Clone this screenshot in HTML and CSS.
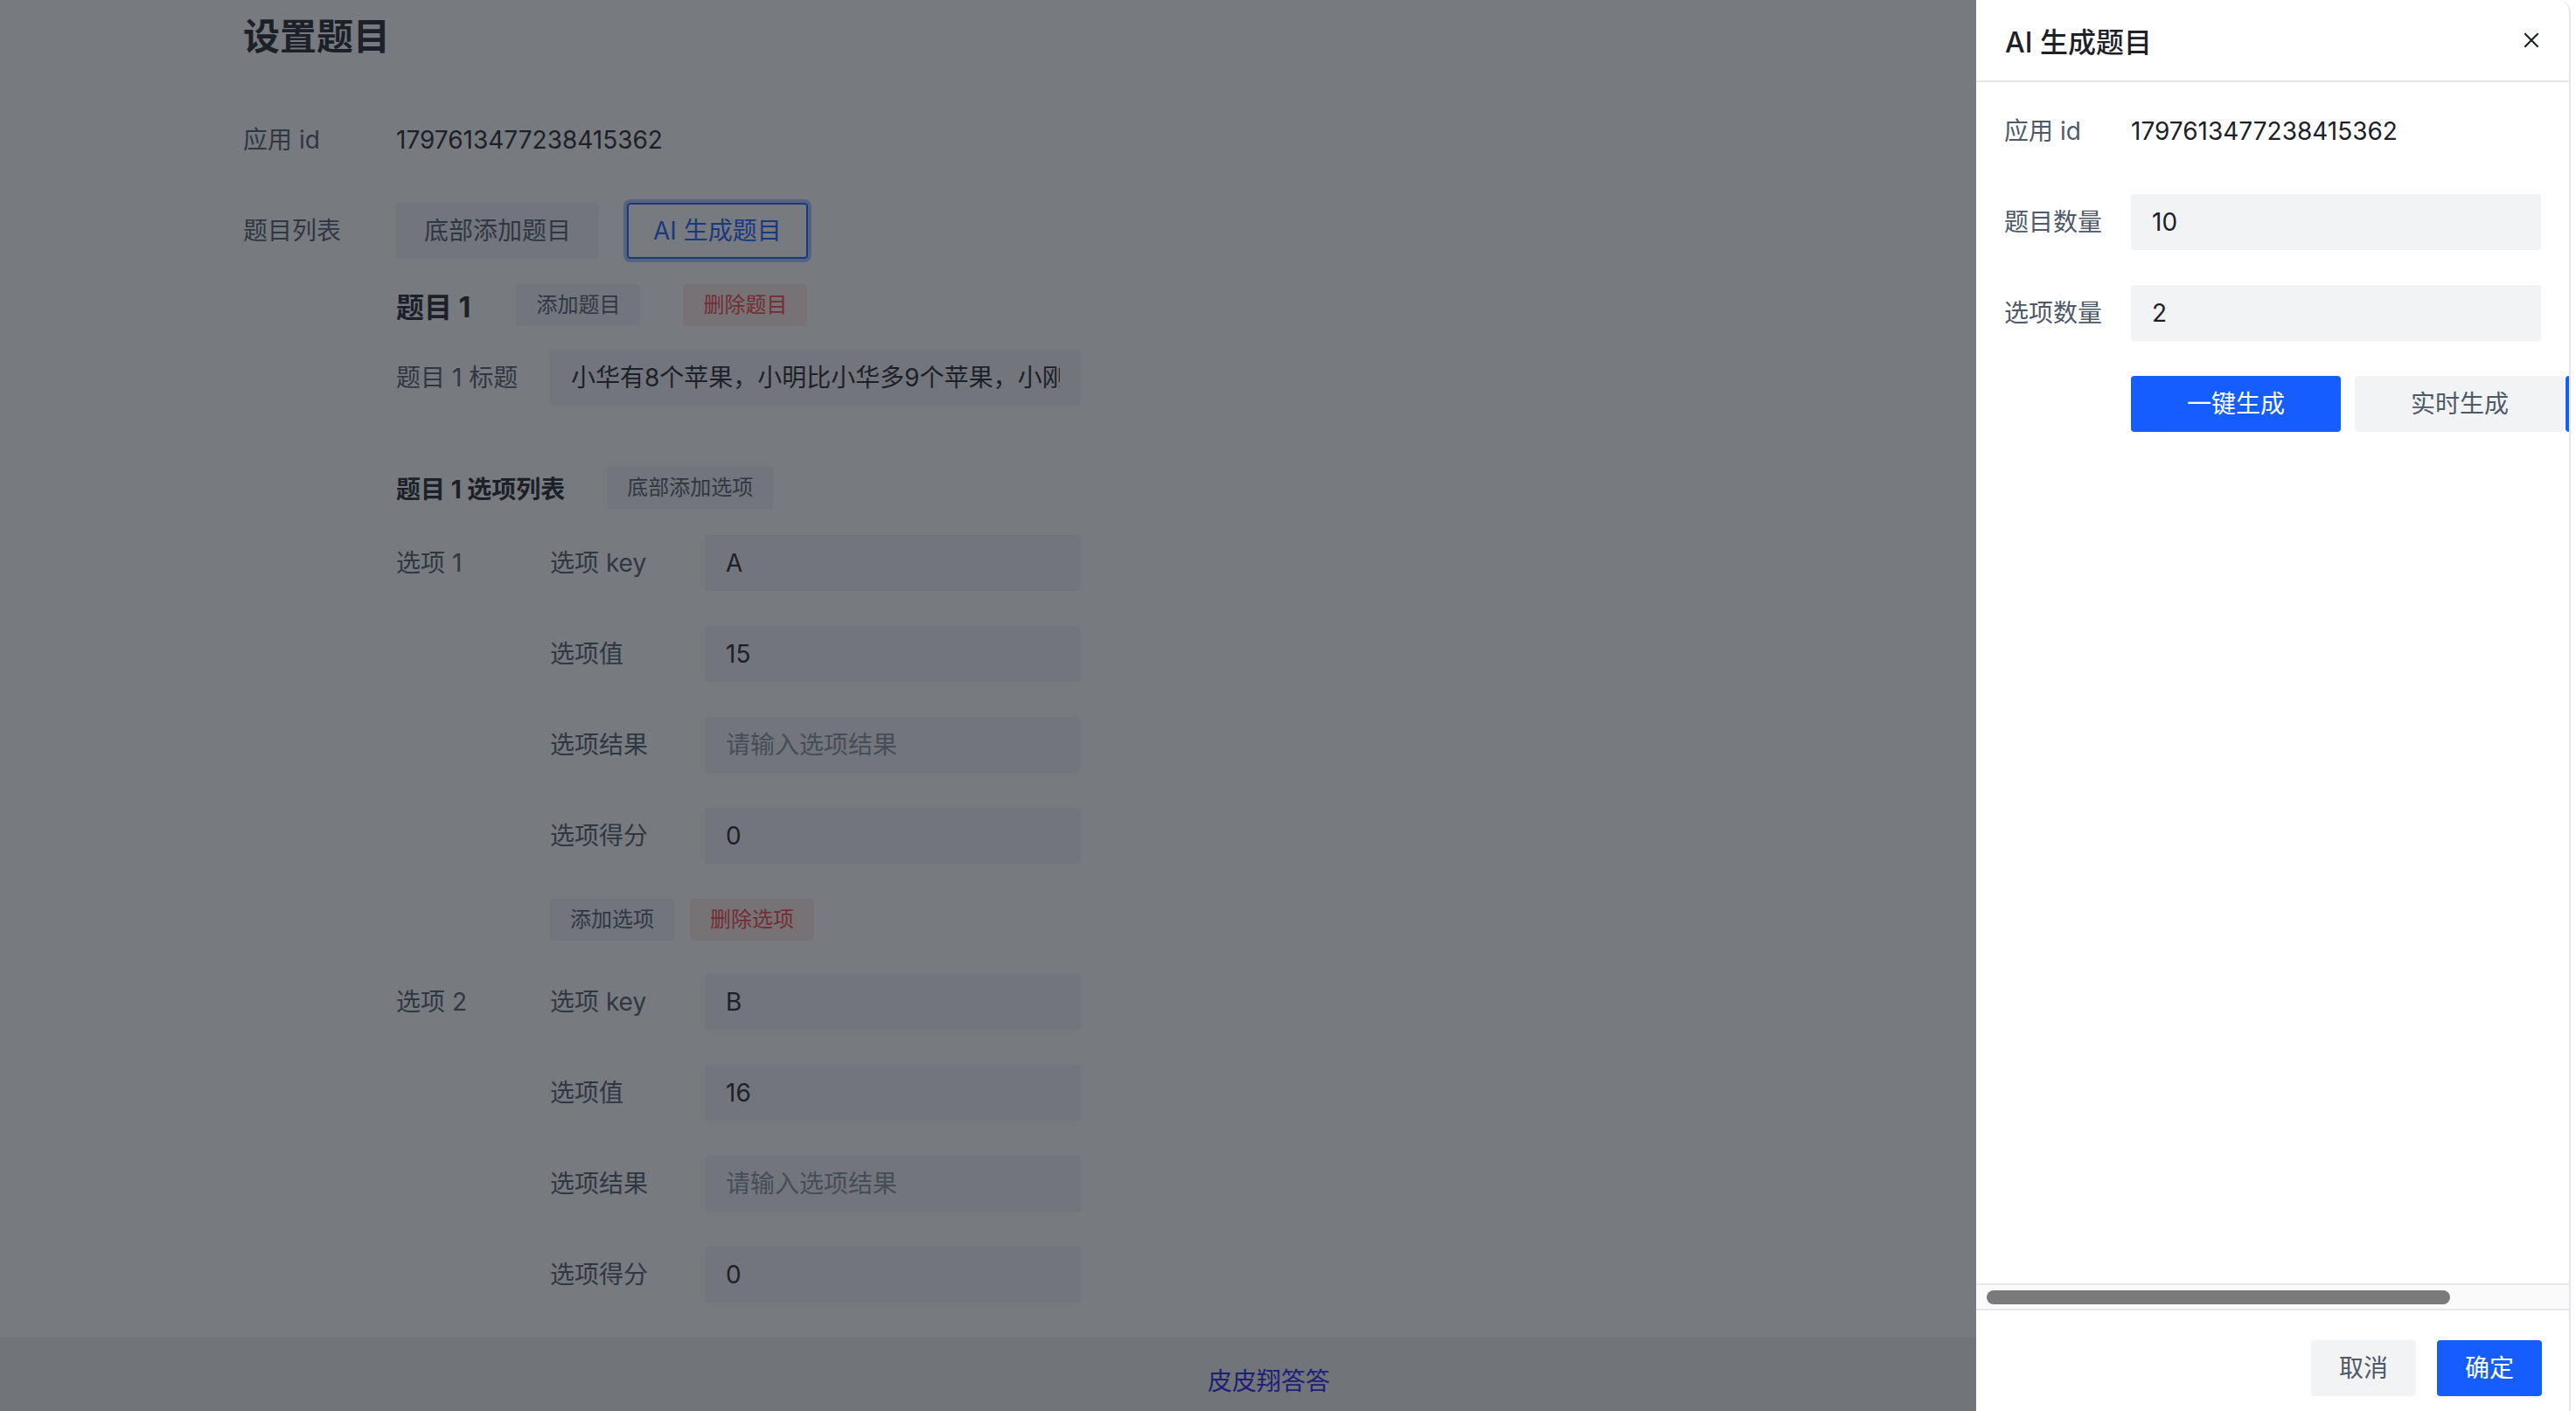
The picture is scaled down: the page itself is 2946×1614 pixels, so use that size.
FILE: index.html
```html
<!DOCTYPE html>
<html lang="zh-CN">
<head>
<meta charset="utf-8">
<title>设置题目</title>
<link rel="stylesheet" href="styles.css">
</head>
<body>
<div class="page">
  <main class="main">
    <h2 class="title">设置题目</h2>
    <div class="form">
      <div class="item">
        <div class="label">应用 id</div>
        <div class="control text">1797613477238415362</div>
      </div>
      <div class="item">
        <div class="label">题目列表</div>
        <div class="control">
          <div class="space-lg">
            <button class="btn btn-wide">底部添加题目</button>
            <button class="btn btn-outline">AI 生成题目</button>
          </div>
          <div class="q-head">
            <span class="q-title">题目 1</span>
            <button class="btn btn-mini">添加题目</button>
            <button class="btn btn-mini btn-danger">删除题目</button>
          </div>
          <div class="item q-item">
            <div class="label label-sub">题目 1 标题</div>
            <div class="control"><div class="input"><span>小华有8个苹果，小明比小华多9个苹果，小刚比小明少3个苹果，请问小刚有几个苹果？</span></div></div>
          </div>
          <div class="opt-head">
            <span class="opt-title">题目 1 选项列表</span>
            <button class="btn btn-mini">底部添加选项</button>
          </div>
          <div class="option">
            <div class="opt-name">选项 1</div>
            <div class="opt-fields">
              <div class="item">
                <div class="label label-sub">选项 key</div>
                <div class="control"><div class="input"><span>A</span></div></div>
              </div>
              <div class="item">
                <div class="label label-sub">选项值</div>
                <div class="control"><div class="input"><span>15</span></div></div>
              </div>
              <div class="item">
                <div class="label label-sub">选项结果</div>
                <div class="control"><div class="input placeholder"><span>请输入选项结果</span></div></div>
              </div>
              <div class="item">
                <div class="label label-sub">选项得分</div>
                <div class="control"><div class="input"><span>0</span></div></div>
              </div>
              <div class="space-sm">
                <button class="btn btn-mini">添加选项</button>
                <button class="btn btn-mini btn-danger">删除选项</button>
              </div>
            </div>
          </div>
          <div class="option">
            <div class="opt-name">选项 2</div>
            <div class="opt-fields">
              <div class="item">
                <div class="label label-sub">选项 key</div>
                <div class="control"><div class="input"><span>B</span></div></div>
              </div>
              <div class="item">
                <div class="label label-sub">选项值</div>
                <div class="control"><div class="input"><span>16</span></div></div>
              </div>
              <div class="item">
                <div class="label label-sub">选项结果</div>
                <div class="control"><div class="input placeholder"><span>请输入选项结果</span></div></div>
              </div>
              <div class="item">
                <div class="label label-sub">选项得分</div>
                <div class="control"><div class="input"><span>0</span></div></div>
              </div>
            </div>
          </div>
        </div>
      </div>
    </div>
  </main>
  <footer class="footer"><a class="footer-link" href="#">皮皮翔答答</a></footer>
</div>

<div class="mask"></div>

<div class="drawer-wrap">
  <div class="drawer">
    <div class="drawer-header">
      <span class="drawer-title">AI 生成题目</span>
      <span class="close">
        <svg width="26" height="26" viewBox="0 0 48 48" fill="none" stroke="#1d2129" stroke-width="4">
          <path d="M9.857 9.858 38.142 38.142M38.142 9.858 9.857 38.142"/>
        </svg>
      </span>
    </div>
    <div class="drawer-body">
      <div class="d-item">
        <div class="d-label">应用 id</div>
        <div class="text">1797613477238415362</div>
      </div>
      <div class="d-item">
        <div class="d-label">题目数量</div>
        <div class="control"><div class="input"><span>10</span></div></div>
      </div>
      <div class="d-item">
        <div class="d-label">选项数量</div>
        <div class="control"><div class="input"><span>2</span></div></div>
      </div>
      <div class="d-item">
        <div class="d-label"></div>
        <div class="d-actions">
          <button class="btn btn-primary btn-fixed">一键生成</button>
          <button class="btn btn-fixed">实时生成</button>
          <button class="btn btn-primary btn-fixed btn-tail" aria-label="更多"></button>
        </div>
      </div>
    </div>
    <div class="hscroll"><div class="thumb"></div></div>
    <div class="drawer-footer">
      <button class="btn btn-foot">取消</button>
      <button class="btn btn-primary btn-foot">确定</button>
    </div>
  </div>
</div>
</body>
</html>
```

FILE: styles.css
```css
* { box-sizing: border-box; }

html, body {
  margin: 0;
  padding: 0;
}

body {
  width: 2946px;
  height: 1614px;
  overflow: hidden;
  background: #ffffff;
  font-family: Inter, "Noto Sans CJK SC", sans-serif;
  font-size: 28px;
  color: #1d2129;
}

.page {
  display: flex;
  flex-direction: column;
  height: 1614px;
}

.main {
  height: 1530px;
  flex: none;
  overflow: hidden;
  padding-left: 278px;
}

.title {
  margin: 14px 0 0;
  font-size: 42px;
  line-height: 56px;
  font-weight: 600;
  color: #1d2129;
}

.form {
  margin-top: 58px;
  width: 958px;
}

.item {
  display: flex;
  align-items: flex-start;
  margin-bottom: 40px;
}

.label {
  flex: none;
  width: 175px;
  line-height: 64px;
  color: #4e5969;
  white-space: nowrap;
}

.label-sub {
  width: 176px;
}

.control {
  flex: 1;
  min-width: 0;
}

.text {
  line-height: 64px;
  color: #1d2129;
}

.input {
  height: 64px;
  padding: 0 24px;
  background: #f2f3f5;
  border-radius: 4px;
  color: #1d2129;
}

.input span {
  display: block;
  line-height: 64px;
  white-space: nowrap;
  overflow: hidden;
}

.input.placeholder {
  color: #86909c;
}

/* buttons */
.btn {
  font: inherit;
  border: 0;
  height: 64px;
  padding: 0 30px;
  border-radius: 4px;
  background: #f2f3f5;
  color: #4e5969;
  line-height: 64px;
  white-space: nowrap;
  flex: none;
}

.btn-wide {
  padding: 0 32px;
}

.btn-mini {
  height: 48px;
  line-height: 48px;
  padding: 0 23px;
  font-size: 24px;
}

.btn-danger {
  background: #ffece8;
  color: #f53f3f;
}

.btn-outline {
  background: transparent;
  border: 2px solid #165dff;
  color: #165dff;
  line-height: 60px;
  padding: 0 28px;
  box-shadow: 0 0 0 4px #a9c9ff;
}

.btn-primary {
  background: #165dff;
  color: #ffffff;
}

.space-lg {
  display: flex;
  gap: 32px;
}

.space-sm {
  display: flex;
  gap: 18px;
}

.q-head {
  display: flex;
  align-items: center;
  gap: 49px;
  height: 48px;
  margin-top: 29px;
}

.q-title {
  font-size: 32px;
  font-weight: 700;
  color: #1d2129;
  margin-right: 3px;
}

.q-item {
  margin-top: 27px;
}

.opt-head {
  display: flex;
  align-items: center;
  gap: 48px;
  height: 48px;
  margin-top: 70px;
}

.opt-title {
  font-size: 28px;
  font-weight: 700;
  color: #1d2129;
}

.option {
  display: flex;
  align-items: flex-start;
  margin-top: 30px;
}

.option + .option {
  margin-top: 38px;
}

.opt-name {
  flex: none;
  width: 176px;
  line-height: 64px;
  color: #4e5969;
}

.opt-fields {
  flex: 1;
  min-width: 0;
}

.opt-fields .label-sub {
  width: 177px;
}

/* page footer */
.footer {
  flex: none;
  height: 84px;
  background: #efefef;
  text-align: center;
  padding: 28px 44px 0 0;
  line-height: 44px;
}

.footer-link {
  color: #2020f0;
  text-decoration: none;
  font-size: 28px;
}

/* mask + drawer */
.mask {
  position: fixed;
  inset: 0;
  background: rgba(29, 33, 41, 0.6);
}

.drawer-wrap {
  position: fixed;
  top: 0;
  right: 0;
  bottom: 0;
  width: 686px;
  background: #ffffff;
}

.drawer {
  width: 680px;
  height: 1614px;
  display: flex;
  flex-direction: column;
  background: #ffffff;
  border-right: 2px solid #e5e6eb;
  border-top-right-radius: 14px;
  overflow: hidden;
}

.drawer-header {
  flex: none;
  height: 94px;
  border-bottom: 2px solid #e5e6eb;
  padding: 0 30px 0 33px;
  display: flex;
  align-items: center;
  justify-content: space-between;
}

.drawer-title {
  font-size: 32px;
  font-weight: 500;
  color: #1d2129;
}

.close {
  display: flex;
  width: 26px;
  height: 26px;
}

.drawer-body {
  flex: 1;
  min-height: 0;
  overflow: hidden;
  padding: 24px 0 0 32px;
}

.d-item {
  display: flex;
  align-items: flex-start;
  margin-bottom: 40px;
  width: 614px;
}

.d-label {
  flex: none;
  width: 145px;
  line-height: 64px;
  color: #4e5969;
  white-space: nowrap;
}

.d-actions {
  display: flex;
}

.btn-fixed {
  width: 240px;
  padding: 0;
  text-align: center;
}

.btn-fixed:first-child {
  margin-right: 16px;
}

.btn-tail {
  margin-left: 1px;
}

.hscroll {
  flex: none;
  height: 29px;
  background: #fafafa;
  border-top: 2px solid #e8e8e8;
  padding: 6px 0 0 12px;
}

.thumb {
  width: 530px;
  height: 16px;
  border-radius: 8px;
  background: #7a7a7a;
}

.drawer-footer {
  flex: none;
  height: 117px;
  border-top: 2px solid #e5e6eb;
  padding: 34px 31px 0 0;
  display: flex;
  justify-content: flex-end;
  gap: 24px;
}

.btn-foot {
  width: 120px;
  padding: 0;
  text-align: center;
}
```
